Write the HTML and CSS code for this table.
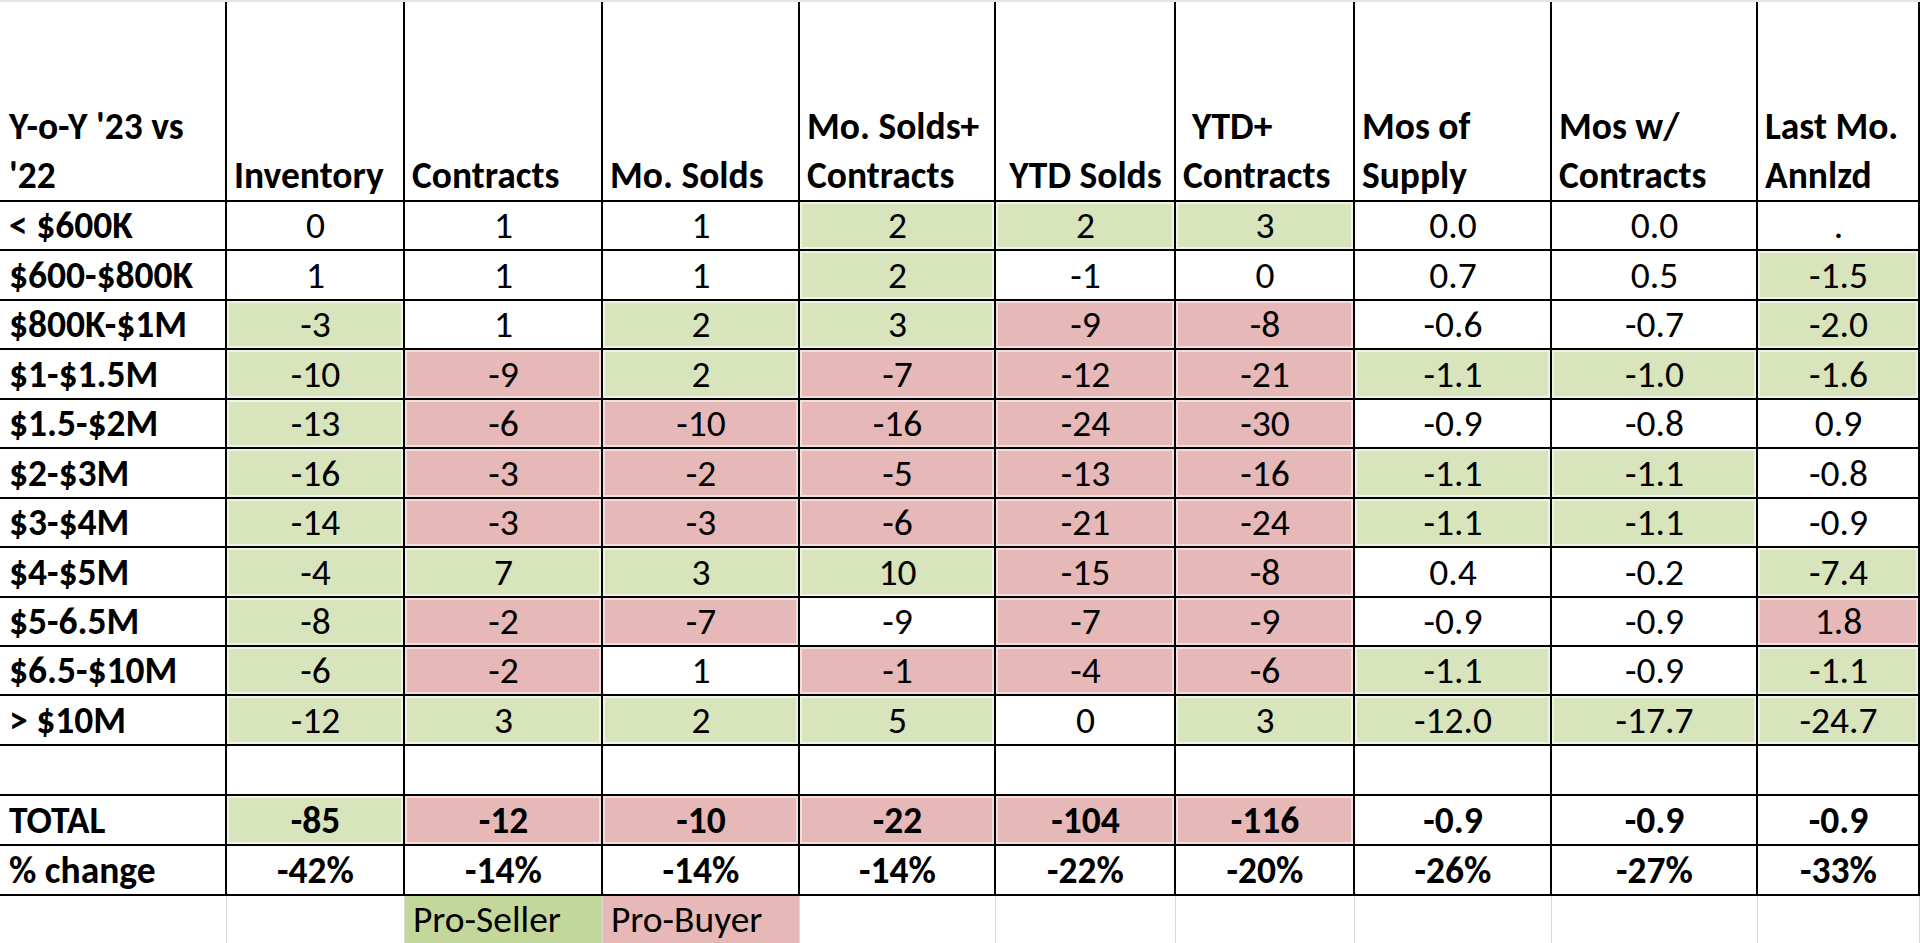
FILE: index.html
```html
<!DOCTYPE html>
<html>
<head>
<meta charset="utf-8">
<link rel="stylesheet" href="styles.css">
</head>
<body>
<div class="sheet">
  <div class="c h lbl"><span>Y-o-Y '23 vs '22</span></div>
  <div class="c h"><span>Inventory</span></div>
  <div class="c h"><span>Contracts</span></div>
  <div class="c h"><span>Mo. Solds</span></div>
  <div class="c h"><span>Mo. Solds+ Contracts</span></div>
  <div class="c h hc"><span>YTD Solds</span></div>
  <div class="c h"><span><span class="ind">YTD+</span> Contracts</span></div>
  <div class="c h"><span>Mos of Supply</span></div>
  <div class="c h"><span>Mos w/ Contracts</span></div>
  <div class="c h"><span>Last Mo. Annlzd</span></div>

  <div class="c lbl">&lt; $600K</div>
  <div class="c">0</div><div class="c">1</div><div class="c">1</div><div class="c g">2</div><div class="c g">2</div><div class="c g">3</div><div class="c">0.0</div><div class="c">0.0</div><div class="c">.</div>

  <div class="c lbl">$600-$800K</div>
  <div class="c">1</div><div class="c">1</div><div class="c">1</div><div class="c g">2</div><div class="c">-1</div><div class="c">0</div><div class="c">0.7</div><div class="c">0.5</div><div class="c g">-1.5</div>

  <div class="c lbl">$800K-$1M</div>
  <div class="c g">-3</div><div class="c">1</div><div class="c g">2</div><div class="c g">3</div><div class="c r">-9</div><div class="c r">-8</div><div class="c">-0.6</div><div class="c">-0.7</div><div class="c g">-2.0</div>

  <div class="c lbl">$1-$1.5M</div>
  <div class="c g">-10</div><div class="c r">-9</div><div class="c g">2</div><div class="c r">-7</div><div class="c r">-12</div><div class="c r">-21</div><div class="c g">-1.1</div><div class="c g">-1.0</div><div class="c g">-1.6</div>

  <div class="c lbl">$1.5-$2M</div>
  <div class="c g">-13</div><div class="c r">-6</div><div class="c r">-10</div><div class="c r">-16</div><div class="c r">-24</div><div class="c r">-30</div><div class="c">-0.9</div><div class="c">-0.8</div><div class="c">0.9</div>

  <div class="c lbl">$2-$3M</div>
  <div class="c g">-16</div><div class="c r">-3</div><div class="c r">-2</div><div class="c r">-5</div><div class="c r">-13</div><div class="c r">-16</div><div class="c g">-1.1</div><div class="c g">-1.1</div><div class="c">-0.8</div>

  <div class="c lbl">$3-$4M</div>
  <div class="c g">-14</div><div class="c r">-3</div><div class="c r">-3</div><div class="c r">-6</div><div class="c r">-21</div><div class="c r">-24</div><div class="c g">-1.1</div><div class="c g">-1.1</div><div class="c">-0.9</div>

  <div class="c lbl">$4-$5M</div>
  <div class="c g">-4</div><div class="c g">7</div><div class="c g">3</div><div class="c g">10</div><div class="c r">-15</div><div class="c r">-8</div><div class="c">0.4</div><div class="c">-0.2</div><div class="c g">-7.4</div>

  <div class="c lbl">$5-6.5M</div>
  <div class="c g">-8</div><div class="c r">-2</div><div class="c r">-7</div><div class="c">-9</div><div class="c r">-7</div><div class="c r">-9</div><div class="c">-0.9</div><div class="c">-0.9</div><div class="c r">1.8</div>

  <div class="c lbl">$6.5-$10M</div>
  <div class="c g">-6</div><div class="c r">-2</div><div class="c">1</div><div class="c r">-1</div><div class="c r">-4</div><div class="c r">-6</div><div class="c g">-1.1</div><div class="c">-0.9</div><div class="c g">-1.1</div>

  <div class="c lbl">&gt; $10M</div>
  <div class="c g">-12</div><div class="c g">3</div><div class="c g">2</div><div class="c g">5</div><div class="c">0</div><div class="c g">3</div><div class="c g">-12.0</div><div class="c g">-17.7</div><div class="c g">-24.7</div>

  <div class="c lbl"></div>
  <div class="c"></div><div class="c"></div><div class="c"></div><div class="c"></div><div class="c"></div><div class="c"></div><div class="c"></div><div class="c"></div><div class="c"></div>

  <div class="c lbl">TOTAL</div>
  <div class="c b g">-85</div><div class="c b r">-12</div><div class="c b r">-10</div><div class="c b r">-22</div><div class="c b r">-104</div><div class="c b r">-116</div><div class="c b">-0.9</div><div class="c b">-0.9</div><div class="c b">-0.9</div>

  <div class="c lbl">% change</div>
  <div class="c b">-42%</div><div class="c b">-14%</div><div class="c b">-14%</div><div class="c b">-14%</div><div class="c b">-22%</div><div class="c b">-20%</div><div class="c b">-26%</div><div class="c b">-27%</div><div class="c b">-33%</div>

  <div class="l"></div>
  <div class="l"></div>
  <div class="l seller">Pro-Seller</div>
  <div class="l buyer">Pro-Buyer</div>
  <div class="l"></div><div class="l"></div><div class="l"></div><div class="l"></div><div class="l"></div><div class="l"></div>
</div>
</body>
</html>
```
FILE: styles.css
```css
html, body {
  margin: 0;
  padding: 0;
  background: #ffffff;
}
body {
  width: 1920px;
  height: 943px;
  overflow: hidden;
  font-family: Carlito, Calibri, Lato, sans-serif;
  color: #000;
}
.sheet {
  display: grid;
  grid-template-columns: 227px 178px 198px 197px 196px 180px 179px 197px 206px 162px;
  grid-template-rows: 200px repeat(11, 49.45px) 50px 50px 50px 1fr;
  height: 943px;
  box-sizing: border-box;
  border-top: 2px solid #e4e4e4;
}
.c {
  box-sizing: border-box;
  border-right: 2px solid #000;
  border-bottom: 2px solid #000;
  display: flex;
  align-items: flex-end;
  justify-content: center;
  font-size: 37.5px;
  line-height: 36px;
  padding: 0 6px 6px 7px;
  white-space: nowrap;
}
.h {
  font-weight: bold;
  justify-content: flex-start;
  white-space: normal;
  line-height: 49px;
  padding-bottom: 0;
}
.hc { justify-content: center; }
.ind { margin-left: 9px; }
.lbl {
  font-weight: bold;
  justify-content: flex-start;
  padding-left: 9px;
}
.b { font-weight: bold; }
.g {
  background: #d8e4bc;
  box-shadow: inset 0 0 0 2px #eef3e2;
}
.r {
  background: #e6b8b7;
  box-shadow: inset 0 0 0 2px #f4dedd;
}
.l {
  box-sizing: border-box;
  border-right: 1px solid #d9d9d9;
  font-size: 37.5px;
  line-height: 36px;
  display: flex;
  align-items: flex-end;
  padding: 0 6px 6px 8px;
}
.seller { background: #c4d79b; }
.buyer { background: #e6b8b7; }
```
